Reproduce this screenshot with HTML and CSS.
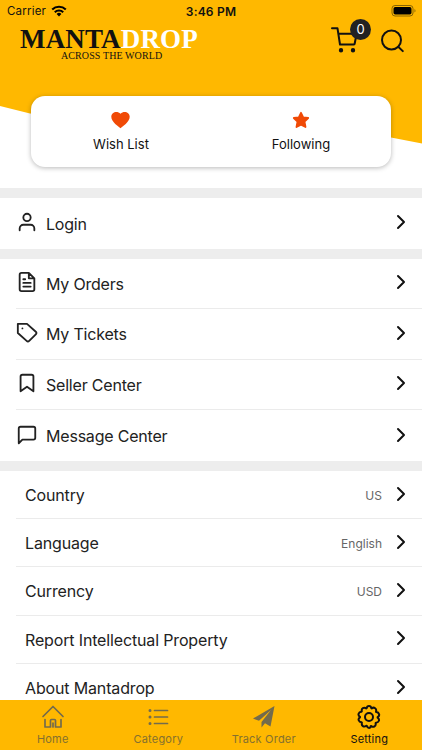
FILE: index.html
```html
<!DOCTYPE html>
<html lang="en">
<head>
    <meta charset="UTF-8">
    <meta name="viewport" content="width=device-width, initial-scale=1.0">
    <title>Mantadrop - Setting</title>
    <link rel="stylesheet" href="styles.css">
</head>
<body>
    <svg class="sprite">
        <symbol id="chevron" viewBox="0 0 10 16"><path d="M2 2l6 6-6 6"/></symbol>
    </svg>
    <div class="screen">
        <header class="hero">
            <div class="status-bar">
                <div class="carrier">
                    <span>Carrier</span>
                    <svg width="16" height="12" viewBox="0 0 16 12" fill="none" stroke="#000" stroke-width="2.1">
                        <path d="M1.2 4.5a9.8 9.8 0 0 1 13.6 0M3.8 7.2a6 6 0 0 1 8.4 0"/>
                        <path d="M8 11.5L5.6 9a3.5 3.5 0 0 1 4.8 0z" fill="#000" stroke="none"/>
                    </svg>
                </div>
                <span class="time">3:46 PM</span>
                <svg class="battery" width="26" height="12" viewBox="0 0 26 12">
                    <rect x="1" y=".5" width="21" height="10.5" rx="3" fill="none" stroke="#8a6500"/>
                    <rect x="2.5" y="2" width="18" height="7.5" rx="1.7"/>
                    <path d="M23.5 4v3.5c1.3-.5 1.3-3 0-3.5z" fill="#8a6500"/>
                </svg>
            </div>
            <div class="top-bar">
                <div class="logo">
                    <div class="logo-name">MANTA<span>DROP</span></div>
                    <div class="logo-tagline">ACROSS THE WORLD</div>
                </div>
                <div class="actions">
                    <div class="cart">
                        <svg width="28" height="28" viewBox="0 0 28 28" fill="none" stroke="#111" stroke-width="2" stroke-linecap="round" stroke-linejoin="round">
                            <path d="M1 2.300h5.500L9 18.500h14M7.600 7.700h18l-2 10.300"/>
                            <circle cx="10" cy="24.200" r="1.200" fill="#111"/>
                            <circle cx="22" cy="24.200" r="1.200" fill="#111"/>
                        </svg>
                        <span class="badge">0</span>
                    </div>
                    <svg width="24" height="24" viewBox="0 0 24 24" fill="none" stroke="#111" stroke-width="2" stroke-linecap="round">
                        <circle cx="11.500" cy="11" r="9.500"/>
                        <path d="M18.200 17.700l4.600 4.400"/>
                    </svg>
                </div>
            </div>
            <div class="card">
                <div class="card-item">
                    <svg width="20" height="18" viewBox="0 0 20 18" fill="#f04a06">
                        <path d="M9.500 17.200C7.800 16 .3 10.900.3 5.800.3 1.200 6.200-.7 9.500 2.800 12.800-.7 18.700 1.200 18.700 5.800 18.700 10.900 11.200 16 9.500 17.200z"/>
                    </svg>
                    <span>Wish List</span>
                </div>
                <div class="card-item">
                    <svg width="20" height="18" viewBox="0 0 20 18" fill="#f04a06" stroke="#f04a06" stroke-width="1.800" stroke-linejoin="round">
                        <path d="M10 1.800l2.200 4.600 5 .6-3.700 3.600 1 5.400-4.500-2.300-4.500 2.300 1-5.400L2.800 7l5-.6z"/>
                    </svg>
                    <span>Following</span>
                </div>
            </div>
        </header>

        <section class="group">
            <div class="row">
                <svg class="row-icon" viewBox="0 0 24 24"><path d="M20 21v-2a4 4 0 0 0-4-4H8a4 4 0 0 0-4 4v2"/><circle cx="12" cy="7" r="4"/></svg>
                <span class="label">Login</span>
                <svg class="chevron"><use href="#chevron"/></svg>
            </div>
        </section>

        <section class="group">
            <div class="row">
                <svg class="row-icon" viewBox="0 0 24 24"><path d="M14 2H6a2 2 0 0 0-2 2v16a2 2 0 0 0 2 2h12a2 2 0 0 0 2-2V8zM14 2v6h6M16 13H8M16 17H8M10 9H8"/></svg>
                <span class="label">My Orders</span>
                <svg class="chevron"><use href="#chevron"/></svg>
            </div>
            <div class="row">
                <svg class="row-icon" viewBox="0 0 24 24"><path d="M21.600 13.400l-7.200 7.200a2 2 0 0 1-2.800 0L2 12V2h10l9.600 8.600a2 2 0 0 1 0 2.800zM7 7h.01"/></svg>
                <span class="label">My Tickets</span>
                <svg class="chevron"><use href="#chevron"/></svg>
            </div>
            <div class="row">
                <svg class="row-icon" viewBox="0 0 24 24"><path d="M19 21l-7-5-7 5V5a2 2 0 0 1 2-2h10a2 2 0 0 1 2 2z"/></svg>
                <span class="label">Seller Center</span>
                <svg class="chevron"><use href="#chevron"/></svg>
            </div>
            <div class="row">
                <svg class="row-icon" viewBox="0 0 24 24"><path d="M21 15a2 2 0 0 1-2 2H7l-4 4V5a2 2 0 0 1 2-2h14a2 2 0 0 1 2 2z"/></svg>
                <span class="label">Message Center</span>
                <svg class="chevron"><use href="#chevron"/></svg>
            </div>
        </section>

        <section class="group plain">
            <div class="row">
                <span class="label">Country</span>
                <span class="value">US</span>
                <svg class="chevron"><use href="#chevron"/></svg>
            </div>
            <div class="row">
                <span class="label">Language</span>
                <span class="value">English</span>
                <svg class="chevron"><use href="#chevron"/></svg>
            </div>
            <div class="row">
                <span class="label">Currency</span>
                <span class="value">USD</span>
                <svg class="chevron"><use href="#chevron"/></svg>
            </div>
            <div class="row">
                <span class="label">Report Intellectual Property</span>
                <svg class="chevron"><use href="#chevron"/></svg>
            </div>
            <div class="row">
                <span class="label">About Mantadrop</span>
                <svg class="chevron"><use href="#chevron"/></svg>
            </div>
        </section>

        <nav class="tab-bar">
            <div class="tab">
                <svg viewBox="0 0 24 24"><path d="M2 11.500L12 1.500l10 10M4 14.500V22h5.500v-6.500q0-1 1-1h3q1 0 1 1V22H20v-7.500M12 18v4"/></svg>
                <span>Home</span>
            </div>
            <div class="tab">
                <svg viewBox="0 0 24 24"><path d="M8.500 5.500h13M8.500 12h13M8.500 18.500h13"/><path class="dots" d="M4 5.500h.01M4 12h.01M4 18.500h.01"/></svg>
                <span>Category</span>
            </div>
            <div class="tab">
                <svg class="solid" viewBox="0 0 24 24"><path d="M22.500 1L1 13.500l6 2.300L19 5 9.500 17v5.500l3.500-4.200 5.500 3.200z"/></svg>
                <span>Track Order</span>
            </div>
            <div class="tab active">
                <svg viewBox="0 0 24 24"><circle cx="12" cy="12" r="4"/><path d="M9.700 3.200Q10 1 12 1t2.300 2.200l.4.200q1.800-1.400 3.400-.2t.9 3.400l.2.500q2.400.2 2.900 2.100t-1.500 3v.5q1.900 1.300 1.300 3.100t-2.900 1.900l-.4.500q.5 2.200-1.100 3.200t-3.300-.5l-.5.200Q13.500 23 12 23t-2.200-2.100l-.5-.2q-1.800 1.500-3.400.4t-1-3.300l-.3-.5q-2.300-.2-2.900-2T3 12.300v-.5q-2-1.200-1.400-3.100t2.900-2l.3-.5q-.5-2.100 1.100-3.100t3.400.3z"/></svg>
                <span>Setting</span>
            </div>
        </nav>
    </div>
</body>
</html>
```

FILE: styles.css
```css
* {
    box-sizing: border-box;
}
body {
    margin: 0;
    font-family: Inter, "Liberation Sans", sans-serif;
    color: #222;
    background: #fff;
}
svg {
    display: block;
    flex-shrink: 0;
}
.sprite {
    display: none;
}
.screen {
    height: 750px;
    overflow: hidden;
    display: grid;
    grid-template-rows: 188px 60.5px 212.5px 1fr 50px;
}

/* header */
.hero {
    position: relative;
    z-index: 0;
}
.hero::before {
    content: "";
    position: absolute;
    inset: 0;
    z-index: -1;
    background: #ffb800;
    clip-path: polygon(0 0, 100% 0, 100% 143.5px, 391px 137.5px, 30px 113.5px, 0 106px);
}
.status-bar {
    height: 22px;
    display: grid;
    grid-template-columns: 1fr auto 1fr;
    align-items: center;
    padding: 0 5px 0 7px;
    font-size: 11.5px;
    color: #111;
}
.carrier {
    display: flex;
    align-items: center;
    gap: 5px;
    letter-spacing: 0.2px;
}
.time {
    margin-right: 2px;
    font-weight: 600;
    font-size: 12px;
    letter-spacing: 0.2px;
}
.battery {
    justify-self: end;
}
.top-bar {
    height: 74px;
    display: flex;
    justify-content: space-between;
    padding: 2px 18px 0 20px;
}
.logo {
    width: 178px;
    font-family: "Liberation Serif", serif;
    color: #111;
    white-space: nowrap;
}
.logo-name {
    font-size: 27px;
    line-height: 27px;
    padding-top: 2px;
    font-weight: bold;
    letter-spacing: 0.15px;
}
.logo-name span {
    color: #fff;
}
.logo-tagline {
    margin: -2px 0 0 41px;
    font-size: 10px;
    line-height: 10px;
    letter-spacing: 0.1px;
}
.actions {
    display: flex;
    gap: 21px;
    padding-top: 2px;
}
.actions > svg {
    margin-top: 3px;
}
.cart {
    position: relative;
    width: 28px;
}
.badge {
    position: absolute;
    top: -7px;
    left: 19px;
    width: 21px;
    height: 21px;
    border-radius: 50%;
    background: #222;
    color: #fff;
    font-size: 13px;
    line-height: 21px;
    text-align: center;
}
.card {
    height: 71px;
    margin: 0 31px;
    display: grid;
    grid-template-columns: 1fr 1fr;
    background: #fff;
    border-radius: 14px;
    box-shadow: 0 1px 5px rgba(0,0,0,0.28);
}
.card-item {
    display: flex;
    flex-direction: column;
    align-items: center;
    gap: 6px;
    padding-top: 15px;
    font-size: 13px;
    line-height: 18px;
    color: #111;
}

/* list */
.group {
    border-top: 10px solid #ededed;
    min-height: 0;
    overflow: hidden;
}
.row {
    height: 50.6px;
    margin-left: 16px;
    padding-right: 16px;
    display: flex;
    align-items: center;
    border-bottom: 1px solid #ebebeb;
}
.row:last-child {
    border-bottom: none;
}
.row-icon {
    width: 22px;
    height: 22px;
    margin: 0 8px 2px 0;
    fill: none;
    stroke: #222;
    stroke-width: 2;
    stroke-linecap: round;
    stroke-linejoin: round;
}
.label {
    flex: 1;
    padding-top: 1px;
    font-size: 16px;
    letter-spacing: -0.2px;
}
.value {
    margin-right: 14px;
    padding-top: 2px;
    font-size: 12px;
    color: #666;
}
.chevron {
    width: 10px;
    height: 16px;
    margin-bottom: 2px;
    fill: none;
    stroke: #111;
    stroke-width: 2;
    stroke-linecap: round;
    stroke-linejoin: round;
}
.plain .row {
    height: 48.2px;
    padding-left: 9px;
}
.plain .label {
    letter-spacing: -0.15px;
}

/* bottom tabs */
.tab-bar {
    display: grid;
    grid-template-columns: repeat(4, 1fr);
    background: #ffb800;
}
.tab {
    display: flex;
    flex-direction: column;
    align-items: center;
    padding-top: 5px;
    font-size: 11px;
    line-height: 15px;
    letter-spacing: 0.2px;
    color: #84702f;
}
.tab svg {
    width: 24px;
    height: 24px;
    margin-bottom: 3px;
    fill: none;
    stroke: #736b4c;
    stroke-width: 1.7;
    stroke-linecap: round;
    stroke-linejoin: round;
}
.tab .dots {
    stroke-width: 3;
}
.tab .solid {
    fill: #736b4c;
    stroke: none;
}
.tab.active {
    color: #111;
}
.tab.active svg {
    stroke: #111;
    stroke-width: 2;
}
```
